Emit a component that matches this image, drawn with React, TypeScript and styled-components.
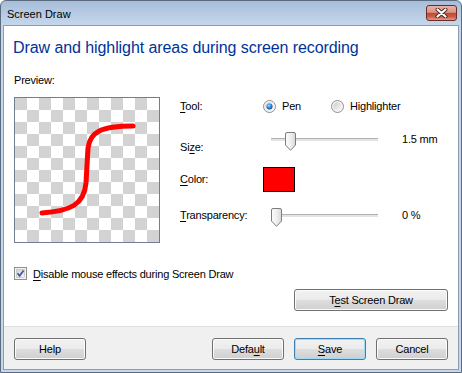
import React from "react";
import styled, { createGlobalStyle } from "styled-components";

const GlobalStyle = createGlobalStyle`
  html, body { margin: 0; padding: 0; background: #fff; }
  body {
    font-family: "Liberation Sans", Arial, sans-serif;
    font-size: 11px;
    letter-spacing: -0.2px;
    color: #000;
  }
  * { box-sizing: border-box; }
`;

const Window = styled.div`
  width: 462px;
  height: 373px;
  display: flex;
  flex-direction: column;
  border: 1px solid #5b6b80;
  border-radius: 6px 6px 0 0;
  background: linear-gradient(#a7bdd9 0, #c4d7ec 24px, #c4d7ec 100%);
  padding: 0 2px 2px;
  overflow: hidden;
`;

const TitleBar = styled.div`
  height: 24px;
  display: flex;
  align-items: flex-start;
  justify-content: space-between;
  padding: 0 2px 0 4px;
`;

const TitleText = styled.div`
  margin-top: 2px;
  line-height: 22px;
  letter-spacing: 0;
`;

const CloseButton = styled.div`
  margin-top: 4px;
  width: 31px;
  height: 16px;
  border: 1px solid #6e2b26;
  border-radius: 3px;
  background: linear-gradient(#e8b2a7 0%, #dc9484 45%, #c04a31 52%, #c95c44 75%, #df9a8a 100%);
  display: flex;
  align-items: center;
  justify-content: center;
`;

const Client = styled.div`
  flex: 1;
  display: flex;
  flex-direction: column;
  border: 1px solid #8b9db3;
  background: #fff;
`;

const Body = styled.div`
  flex: 1;
  padding: 12px 10px 0 10px;
`;

const Heading = styled.h1`
  margin: 0 0 0 -1px;
  font-size: 16px;
  line-height: 20px;
  font-weight: normal;
  letter-spacing: -0.08px;
  color: #003399;
`;

const SectionLabel = styled.div`
  margin-top: 15px;
  line-height: 15px;
`;

const MainRow = styled.div`
  display: flex;
  margin-top: 9px;
  gap: 20px;
`;

const PreviewBox = styled.div`
  width: 146px;
  height: 146px;
  border: 1px solid #6e7f91;
  background: conic-gradient(#fff 0 25%, #d3d3d3 0 50%, #fff 0 75%, #d3d3d3 0) 0 0 / 24px 24px;
  svg { display: block; }
`;

const Settings = styled.div`
  display: flex;
  flex-direction: column;
`;

const Row = styled.div<{ $top: number; $h: number; $align?: string }>`
  display: flex;
  margin-top: ${(p) => p.$top}px;
  height: ${(p) => p.$h}px;
  align-items: ${(p) => p.$align || "center"};
`;

const Label = styled.div<{ $self?: string; $lh?: number }>`
  width: 83px;
  line-height: ${(p) => p.$lh || 15}px;
  align-self: ${(p) => p.$self || "auto"};
`;

const Key = styled.span`
  text-decoration: underline;
  text-underline-offset: 2px;
`;

const RadioOption = styled.label<{ $w?: number }>`
  display: flex;
  align-items: center;
  gap: 6px;
  width: ${(p) => (p.$w ? `${p.$w}px` : "auto")};
  svg { display: block; }
`;

const SliderBox = styled.div<{ $mt: number }>`
  position: relative;
  width: 107px;
  height: 19px;
  margin: ${(p) => p.$mt}px 0 0 8px;
`;

const Track = styled.div`
  position: absolute;
  left: 0;
  right: 0;
  top: 6px;
  height: 3px;
  background: #e3e3e3;
  border-top: 1px solid #b3b3b3;
`;

const Thumb = styled.svg`
  position: absolute;
  top: 0;
  display: block;
`;

const Value = styled.div<{ $mt: number; $lh: number }>`
  margin: ${(p) => p.$mt}px 0 0 24px;
  line-height: ${(p) => p.$lh}px;
`;

const Swatch = styled.div<{ $color: string }>`
  width: 32px;
  height: 25px;
  border: 1px solid #000;
  background: ${(p) => p.$color};
`;

const CheckRow = styled.label`
  display: flex;
  align-items: center;
  height: 15px;
  margin-top: 23px;
  gap: 6px;
  svg { display: block; }
`;

const ActionRow = styled.div`
  display: flex;
  justify-content: flex-end;
  margin-top: 8px;
`;

const Button = styled.button<{ $w?: number; $focus?: boolean }>`
  width: ${(p) => p.$w || 72}px;
  height: 22px;
  padding: 0;
  font-family: "Liberation Sans", Arial, sans-serif;
  font-size: 11px;
  letter-spacing: -0.2px;
  color: #000;
  border: 1px solid ${(p) => (p.$focus ? "#3c7fb1" : "#707070")};
  border-radius: 3px;
  background: linear-gradient(#f2f2f2 0%, #ebebeb 48%, #dddddd 52%, #cfcfcf 100%);
  box-shadow: inset 0 0 0 1px ${(p) => (p.$focus ? "#9fdcf7" : "#fbfbfb")};
`;

const Footer = styled.div`
  height: 43px;
  display: flex;
  align-items: flex-start;
  padding: 11px 10px 0;
  border-top: 1px solid #dfdfdf;
  background: #f0f0f0;
`;

const Spacer = styled.div`
  flex: 1;
`;

const ButtonGroup = styled.div`
  display: flex;
  gap: 10px;
`;

const Radio = ({ checked, id }: { checked: boolean; id: string }) => (
  <svg width="13" height="13" viewBox="0 0 13 13">
    <defs>
      <linearGradient id={`rg-${id}`} x1="0" y1="0" x2="1" y2="1">
        <stop offset="0" stopColor="#cdcdcd" />
        <stop offset="1" stopColor="#fbfbfb" />
      </linearGradient>
      <radialGradient id={`rd-${id}`} cx="0.4" cy="0.35" r="0.7">
        <stop offset="0" stopColor="#a8deff" />
        <stop offset="0.5" stopColor="#2b8ae0" />
        <stop offset="1" stopColor="#0b4c98" />
      </radialGradient>
    </defs>
    <circle cx="6.5" cy="6.5" r="6" fill="#f5f5f5" stroke="#8e8f8f" />
    <circle cx="6.5" cy="6.5" r="4.3" fill={`url(#rg-${id})`} />
    {checked && <circle cx="6.5" cy="6.5" r="3" fill={`url(#rd-${id})`} />}
  </svg>
);

const Slider = ({ pos, mt, id }: { pos: number; mt: number; id: string }) => (
  <SliderBox $mt={mt}>
    <Track />
    <Thumb width="11" height="19" viewBox="0 0 11 19" style={{ left: pos }}>
      <defs>
        <linearGradient id={`tg-${id}`} x1="0" y1="0" x2="1" y2="0">
          <stop offset="0" stopColor="#fdfdfd" />
          <stop offset="0.6" stopColor="#ececec" />
          <stop offset="1" stopColor="#d6d6d6" />
        </linearGradient>
      </defs>
      <path
        d="M2 0.5 H9 A1.5 1.5 0 0 1 10.5 2 V13 L5.5 18.3 L0.5 13 V2 A1.5 1.5 0 0 1 2 0.5 Z"
        fill={`url(#tg-${id})`}
        stroke="#7d7d7d"
      />
    </Thumb>
  </SliderBox>
);

const Checkbox = () => (
  <svg width="13" height="13" viewBox="0 0 13 13">
    <defs>
      <linearGradient id="cbg" x1="0" y1="0" x2="1" y2="1">
        <stop offset="0" stopColor="#d0d0d0" />
        <stop offset="1" stopColor="#f6f6f6" />
      </linearGradient>
    </defs>
    <rect x="0.5" y="0.5" width="12" height="12" fill="#f4f4f4" stroke="#8e8f8f" />
    <rect x="2.5" y="2.5" width="8" height="8" fill="url(#cbg)" stroke="#b9b9b9" strokeWidth="0.6" />
    <path d="M3.5 6.3 L5.6 8.8 L9.6 3.4" fill="none" stroke="#3d5a9e" strokeWidth="1.7" />
  </svg>
);

export default function App() {
  return (
    <>
      <GlobalStyle />
      <Window>
        <TitleBar>
          <TitleText>Screen Draw</TitleText>
          <CloseButton>
            <svg width="13" height="10" viewBox="0 0 13 10">
              <path d="M2.5 1.5 L10.5 8.5 M10.5 1.5 L2.5 8.5" stroke="#4a2420" strokeWidth="4" strokeLinecap="round" />
              <path d="M2.5 1.5 L10.5 8.5 M10.5 1.5 L2.5 8.5" stroke="#fff" strokeWidth="2.2" strokeLinecap="round" />
            </svg>
          </CloseButton>
        </TitleBar>
        <Client>
          <Body>
            <Heading>Draw and highlight areas during screen recording</Heading>
            <SectionLabel>Preview:</SectionLabel>
            <MainRow>
              <PreviewBox>
                <svg width="144" height="144" viewBox="0 0 144 144">
                  <path
                    d="M27 115 C 55 113, 69 107, 71 85 L 73 50 C 75 34, 86 28, 118 28"
                    fill="none"
                    stroke="#ff0000"
                    strokeWidth="5"
                    strokeLinecap="round"
                  />
                </svg>
              </PreviewBox>
              <Settings>
                <Row $top={0} $h={18}>
                  <Label><Key>T</Key>ool:</Label>
                  <RadioOption $w={68}>
                    <Radio checked id="pen" />
                    Pen
                  </RadioOption>
                  <RadioOption>
                    <Radio checked={false} id="hl" />
                    Highlighter
                  </RadioOption>
                </Row>
                <Row $top={13} $h={27} $align="flex-start">
                  <Label $self="flex-end">Si<Key>z</Key>e:</Label>
                  <Slider pos={14} mt={4} id="size" />
                  <Value $mt={4} $lh={15}>1.5 mm</Value>
                </Row>
                <Row $top={12} $h={25}>
                  <Label><Key>C</Key>olor:</Label>
                  <Swatch $color="#ff0000" />
                </Row>
                <Row $top={13} $h={20} $align="flex-start">
                  <Label $lh={20}><Key>T</Key>ransparency:</Label>
                  <Slider pos={0} mt={3} id="tr" />
                  <Value $mt={0} $lh={20}>0 %</Value>
                </Row>
              </Settings>
            </MainRow>
            <CheckRow>
              <Checkbox />
              <span><Key>D</Key>isable mouse effects during Screen Draw</span>
            </CheckRow>
            <ActionRow>
              <Button $w={154}>T<Key>e</Key>st Screen Draw</Button>
            </ActionRow>
          </Body>
          <Footer>
            <Button>Help</Button>
            <Spacer />
            <ButtonGroup>
              <Button>Defa<Key>u</Key>lt</Button>
              <Button $focus><Key>S</Key>ave</Button>
              <Button>Cancel</Button>
            </ButtonGroup>
          </Footer>
        </Client>
      </Window>
    </>
  );
}
